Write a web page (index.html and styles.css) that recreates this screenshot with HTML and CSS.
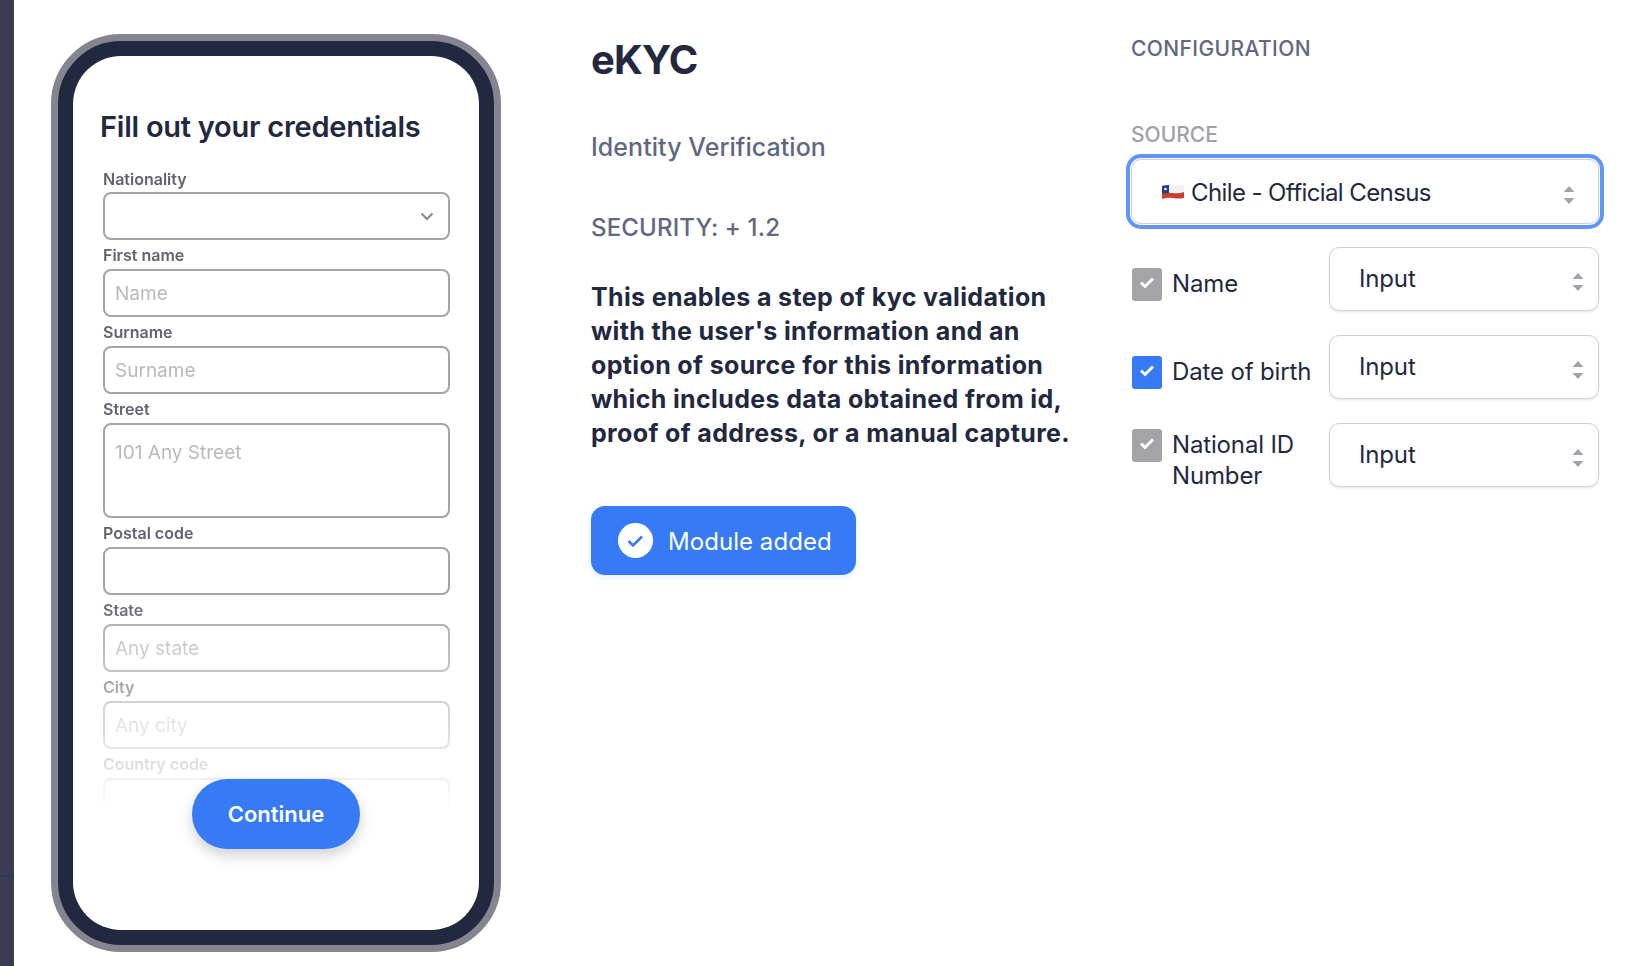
FILE: index.html
```html
<!DOCTYPE html>
<html lang="en">

<head>
	<meta charset="utf-8">
	<title>eKYC</title>
	<link rel="stylesheet" href="styles.css">
</head>

<body>
	<div id="app">
		<div id="sidebar">
			<div class="sidebar-line"></div>
		</div>

		<div id="phone">
			<div class="phone-frame">
				<div class="phone-screen">
					<h2>Fill out your credentials</h2>
					<form class="kyc-form">
						<label>Nationality</label>
						<div class="field select-field">
							<svg width="14" height="9" viewBox="0 0 14 9">
								<path d="M1.5 1.5 7 7l5.500-5.500" fill="none" stroke="#85848f" stroke-width="2" />
							</svg>
						</div>
						<label>First name</label>
						<input class="field" placeholder="Name">
						<label>Surname</label>
						<input class="field" placeholder="Surname">
						<label>Street</label>
						<textarea class="field field-tall" placeholder="101 Any Street"></textarea>
						<label>Postal code</label>
						<input class="field">
						<label>State</label>
						<input class="field" placeholder="Any state">
						<label>City</label>
						<input class="field" placeholder="Any city">
						<label>Country code</label>
						<input class="field">
					</form>
					<button class="continue">Continue</button>
				</div>
			</div>
		</div>

		<div id="details">
			<h1>eKYC</h1>
			<div class="subtitle">Identity Verification</div>
			<div class="security">SECURITY: + 1.2</div>
			<p class="description">This enables a step of kyc validation with the user's information and an option of source for this information which includes data obtained from id, proof of address, or a manual capture.</p>
			<button class="module-added">
				<svg width="35" height="35" viewBox="0 0 35 35">
					<circle cx="17.500" cy="17.500" r="17.500" fill="#fff" />
					<path d="M10.500 18l4.500 4.500 9-9" fill="none" stroke="#367af6" stroke-width="2.600" />
				</svg>
				<span>Module added</span>
			</button>
		</div>

		<div id="config">
			<div class="config-title">CONFIGURATION</div>
			<div class="source-label">SOURCE</div>
			<div class="picker picker-source">
				<svg class="flag" width="22" height="16" viewBox="0 0 22 16">
					<path d="M0 2q5-2 11-1t11 0v7q-6 1-11 0T0 9z" fill="#f1f1f3" />
					<path d="M0 9q5-1 11 0t11-1v6q-6 1-11 0t-11 1z" fill="#c9402f" />
					<path d="M0 2q3-1 7-1v8q-4 0-7 .500z" fill="#1f3d8a" />
					<circle cx="3.500" cy="5" r="1.300" fill="#fff" />
				</svg>
				<span>Chile - Official Census</span>
				<svg class="updown" width="12" height="18" viewBox="0 0 12 18">
					<path d="M6 0l5.500 6H.5zM6 18l5.500-6H.5z" fill="#a3a3ab" />
				</svg>
			</div>

			<div class="rows">
				<div class="row">
					<span class="check check-gray">
						<svg width="16" height="13" viewBox="0 0 16 13"><path d="M2 6.500l4 4 8-8" fill="none" stroke="#fff" stroke-width="3" /></svg>
					</span>
					<span class="row-label">Name</span>
					<div class="picker">
						<span>Input</span>
						<svg class="updown" width="12" height="18" viewBox="0 0 12 18">
							<path d="M6 0l5.500 6H.5zM6 18l5.500-6H.5z" fill="#a3a3ab" />
						</svg>
					</div>
				</div>
				<div class="row">
					<span class="check check-blue">
						<svg width="16" height="13" viewBox="0 0 16 13"><path d="M2 6.500l4 4 8-8" fill="none" stroke="#fff" stroke-width="3" /></svg>
					</span>
					<span class="row-label">Date of birth</span>
					<div class="picker">
						<span>Input</span>
						<svg class="updown" width="12" height="18" viewBox="0 0 12 18">
							<path d="M6 0l5.500 6H.5zM6 18l5.500-6H.5z" fill="#a3a3ab" />
						</svg>
					</div>
				</div>
				<div class="row row-top">
					<span class="check check-gray">
						<svg width="16" height="13" viewBox="0 0 16 13"><path d="M2 6.500l4 4 8-8" fill="none" stroke="#fff" stroke-width="3" /></svg>
					</span>
					<span class="row-label">National ID Number</span>
					<div class="picker">
						<span>Input</span>
						<svg class="updown" width="12" height="18" viewBox="0 0 12 18">
							<path d="M6 0l5.500 6H.5zM6 18l5.500-6H.5z" fill="#a3a3ab" />
						</svg>
					</div>
				</div>
			</div>
		</div>
	</div>
</body>

</html>
```

FILE: styles.css
```css
* {
	box-sizing: border-box;
}

html,
body {
	margin: 0;
	height: 100%;
	overflow: hidden;
	background: #fff;
}

body {
	font-family: Inter, "Noto Sans", sans-serif;
	color: #222840;
}

#app {
	display: flex;
	height: 966px;
}

#sidebar {
	width: 14px;
	flex: none;
	background: #3a3d52;
	padding-top: 875px;
}

.sidebar-line {
	height: 2px;
	background: #2a3a5e;
}

/* phone preview */
#phone {
	flex: none;
	width: 450px;
	margin: 34px 0 0 37px;
}

.phone-frame {
	height: 918px;
	padding: 15px;
	border: 7px solid #85848f;
	border-radius: 70px;
	background: #222840;
}

.phone-screen {
	position: relative;
	height: 100%;
	padding: 53px 29px 0 30px;
	border-radius: 48px;
	background: #fff;
	overflow: hidden;
}

.phone-screen h2 {
	margin: 0 0 22px -3px;
	font-size: 29px;
	line-height: 36px;
	font-weight: 600;
	letter-spacing: -0.25px;
}

.kyc-form {
	display: flex;
	flex-direction: column;
	height: 645px;
	overflow: hidden;
	-webkit-mask-image: linear-gradient(to bottom, #000 66%, transparent 100%);
	mask-image: linear-gradient(to bottom, #000 66%, transparent 100%);
}

.kyc-form label {
	flex: none;
	height: 29px;
	padding-top: 6px;
	font-size: 16px;
	line-height: 18px;
	font-weight: 600;
	color: #5f6372;
}

.kyc-form label:first-child {
	height: 25px;
	padding-top: 3px;
}

.field {
	display: block;
	flex: none;
	width: 100%;
	height: 48px;
	padding: 0 10px;
	border: 2px solid #a3a3a8;
	border-radius: 8px;
	background: #fff;
	font-family: inherit;
	font-size: 19px;
	outline: none;
	resize: none;
}

.field::placeholder {
	color: #b9b9bd;
	opacity: 1;
}

.field-tall {
	height: 95px;
	padding-top: 16px;
	line-height: 24px;
}

.select-field {
	display: flex;
	align-items: center;
	justify-content: flex-end;
	padding-right: 14px;
}

.continue {
	position: absolute;
	left: 119px;
	top: 723px;
	width: 168px;
	height: 70px;
	border: 0;
	border-radius: 35px;
	background: #367af6;
	color: #fff;
	font-family: inherit;
	font-size: 22px;
	font-weight: 600;
	box-shadow: 0 6px 14px rgba(34, 40, 64, 0.22);
}

/* middle column */
#details {
	flex: none;
	width: 540px;
	margin-left: 90px;
}

#details h1 {
	margin: 36px 0 0;
	font-size: 40px;
	line-height: 48px;
	font-weight: 700;
	letter-spacing: -0.8px;
}

.subtitle {
	margin-top: 46px;
	font-size: 25px;
	line-height: 34px;
	font-weight: 500;
	letter-spacing: 0.05px;
	color: #5f6880;
}

.security {
	margin-top: 47px;
	font-size: 24px;
	line-height: 34px;
	font-weight: 500;
	letter-spacing: 0.15px;
	color: #5f6880;
}

.description {
	width: 490px;
	margin: 35px 0 0;
	font-size: 25px;
	line-height: 34px;
	font-weight: 700;
	letter-spacing: 0.36px;
}

.module-added {
	display: flex;
	align-items: center;
	gap: 15px;
	width: 265px;
	height: 69px;
	margin-top: 56px;
	padding: 0 0 0 27px;
	border: 0;
	border-radius: 14px;
	background: #367af6;
	color: #fff;
	font-family: inherit;
	font-size: 24px;
	letter-spacing: 0.05px;
	box-shadow: 0 2px 8px rgba(54, 122, 246, 0.12);
}

.module-added span {
	margin-top: 2px;
}

/* right column */
#config {
	flex: none;
	width: 468px;
}

.config-title {
	margin-top: 34px;
	font-size: 21px;
	line-height: 30px;
	font-weight: 500;
	letter-spacing: 0.4px;
	color: #5f6880;
}

.source-label {
	margin-top: 56px;
	font-size: 21px;
	line-height: 30px;
	font-weight: 500;
	color: #a0a0a8;
}

.picker {
	display: flex;
	flex: none;
	align-items: center;
	justify-content: space-between;
	width: 270px;
	height: 64px;
	margin-left: auto;
	padding: 0 14px 0 29px;
	border: 1px solid #cfcfd4;
	border-radius: 10px;
	background: #fff;
	font-size: 24px;
	letter-spacing: -0.15px;
	box-shadow: 0 1px 2px rgba(34, 40, 64, 0.12);
}

.picker span {
	margin-bottom: 1px;
}

.picker-source {
	width: 100%;
	height: 65px;
	margin-top: 9px;
	padding-left: 30px;
	padding-right: 23px;
	justify-content: flex-start;
	letter-spacing: -0.6px;
	box-shadow: 0 0 0 1px #fff, 0 0 0 5px #6096f8;
}

.picker-source span {
	margin-top: 2px;
	margin-bottom: 0;
}

.picker-source .updown {
	margin-left: auto;
}

.updown {
	margin-top: 6px;
}

.flag {
	margin-right: 7px;
}

.rows {
	display: flex;
	flex-direction: column;
	gap: 24px;
	margin-top: 23px;
}

.row {
	display: flex;
	align-items: flex-start;
}

.check {
	display: flex;
	flex: none;
	align-items: center;
	justify-content: center;
	width: 30px;
	height: 33px;
	margin: 21px 0 0 1px;
	padding-bottom: 4px;
	border-radius: 3px;
}

.check-gray {
	background: #a3a3a8;
}

.check-blue {
	background: #367af6;
}

.row-label {
	width: 157px;
	margin: 21px 0 0 10px;
	font-size: 24px;
	line-height: 31px;
	letter-spacing: -0.15px;
}

.row-top .check {
	margin-top: 6px;
}

.row-top .row-label {
	margin-top: 6px;
}
```
